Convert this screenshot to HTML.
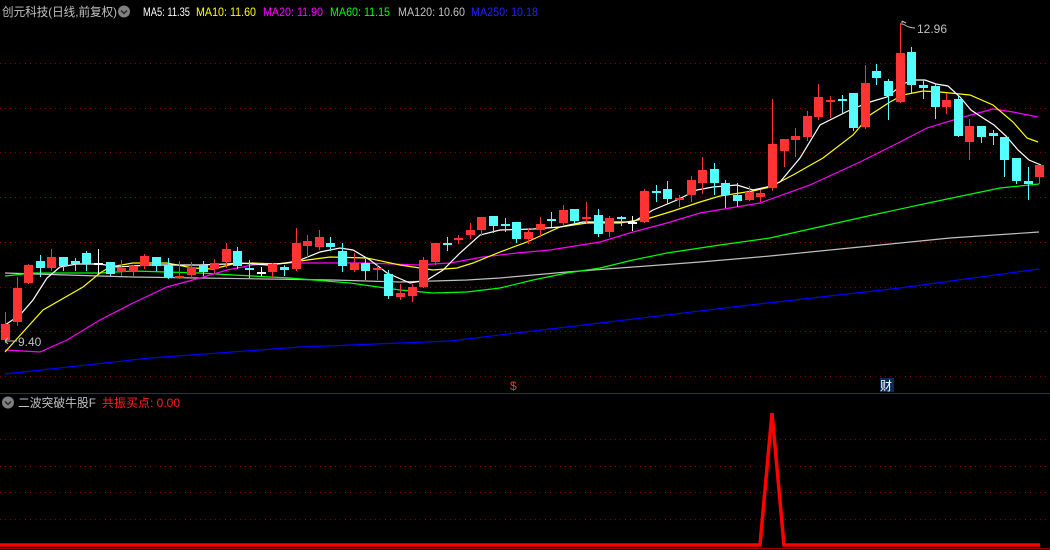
<!DOCTYPE html>
<html><head><meta charset="utf-8"><style>
html,body{margin:0;padding:0;background:#000;width:1050px;height:550px;overflow:hidden}
svg{display:block}
text{font-family:"Liberation Sans","Noto Sans CJK SC",sans-serif}
</style></head><body>
<svg id="s" width="1050" height="550" viewBox="0 0 1050 550" xmlns="http://www.w3.org/2000/svg">
<rect width="1050" height="550" fill="#000"/>
<g stroke="#8b0000" stroke-width="1" stroke-dasharray="1,4">
<line x1="0" y1="63.5" x2="1050" y2="63.5"/><line x1="0" y1="108.5" x2="1050" y2="108.5"/>
<line x1="0" y1="152.5" x2="1050" y2="152.5"/><line x1="0" y1="197.5" x2="1050" y2="197.5"/>
<line x1="0" y1="242.5" x2="1050" y2="242.5"/><line x1="0" y1="287.5" x2="1050" y2="287.5"/>
<line x1="0" y1="331.5" x2="1050" y2="331.5"/><line x1="0" y1="376.5" x2="1050" y2="376.5"/>
<line x1="0" y1="439.5" x2="1050" y2="439.5"/><line x1="0" y1="466.5" x2="1050" y2="466.5"/>
<line x1="0" y1="492.5" x2="1050" y2="492.5"/><line x1="0" y1="519.5" x2="1050" y2="519.5"/>
</g>
<line x1="0" y1="393.5" x2="1050" y2="393.5" stroke="#a00000"/>
<line x1="0" y1="548.5" x2="1050" y2="548.5" stroke="#a00000"/>
<g id="ma" fill="none" stroke-width="1.2">
<polyline stroke="#0000ff" points="5,374 150,358 300,347 450,341 600,323 750,305 900,288 1039,269"/>
<polyline stroke="#c0c0c0" points="5,273 67,275 133,277 200,278 267,279 333,280 400,282 467,280 500,278 567,272 633,267 700,262 770,256 850,248 950,238 1039,232"/>
<polyline stroke="#00ff00" points="5,276 33,273 100,273 133,271 167,272 200,273 233,275 290,278 350,283 400,290 433,293 467,292 500,288 533,280 567,273 600,268 633,260 667,253 720,245 770,238 877,214 933,202 1000,188 1039,184"/>
<polyline stroke="#ff00ff" points="5,350 40,352 67,340 100,320 133,303 167,287 200,278 227,270 253,265 290,263 333,263 367,263 417,265 450,263 483,257 517,253 550,250 600,242 633,232 667,223 700,213 760,203 810,185 860,162 900,142 927,128 960,118 993,109 1013,112 1038,117"/>
<polyline stroke="#ffff00" points="5,352 43,310 83,287 100,273 110,267 133,263 167,263 193,268 213,269 233,264 253,263 277,264 300,261 330,257 367,258 400,265 433,270 457,268 473,263 500,252 527,242 560,227 587,223 620,223 650,218 673,211 700,202 720,196 753,191 770,187 793,175 823,158 853,135 870,115 890,102 903,95 923,91 940,92 970,95 993,105 1013,122 1027,138 1038,142"/>
<polyline stroke="#ffffff" points="5,325 20,315 33,300 47,278 60,267 77,264 100,264 117,267 150,265 173,265 200,265 227,264 240,263 267,265 287,263 300,260 320,252 340,248 353,250 370,260 387,273 410,283 427,280 443,270 460,253 480,235 500,230 533,229 560,227 583,222 633,222 653,210 677,200 697,190 713,187 737,185 753,190 767,187 780,182 800,158 820,125 850,110 870,102 887,97 903,84 913,80 925,80 936,84 948,86 960,97 971,110 983,118 994,125 1006,136 1018,150 1029,160 1041,165"/>
</g>
<g id="c"></g>
<text x="2" y="16" font-size="12" fill="#c0c0c0" textLength="115" lengthAdjust="spacingAndGlyphs">创元科技(日线,前复权)</text>
<circle cx="124" cy="11.5" r="6" fill="#808080"/><path d="M121,10.5 l3,3 l3,-3" stroke="#222" stroke-width="1.3" fill="none"/>
<g font-size="12">
<text x="143" y="16" fill="#fff" textLength="47" lengthAdjust="spacingAndGlyphs">MA5: 11.35</text>
<text x="196" y="16" fill="#ffff00" textLength="60" lengthAdjust="spacingAndGlyphs">MA10: 11.60</text>
<text x="263" y="16" fill="#ff00ff" textLength="60" lengthAdjust="spacingAndGlyphs">MA20: 11.90</text>
<text x="330" y="16" fill="#00ff00" textLength="60" lengthAdjust="spacingAndGlyphs">MA60: 11.15</text>
<text x="398" y="16" fill="#c0c0c0" textLength="67" lengthAdjust="spacingAndGlyphs">MA120: 10.60</text>
<text x="471" y="16" fill="#2020ff" textLength="67" lengthAdjust="spacingAndGlyphs">MA250: 10.18</text>
</g>
<text x="917" y="33" font-size="12" fill="#c0c0c0">12.96</text>
<path d="M902,21 l0,4 M902,21 l4,2 M903,24 q6,4 12,4" stroke="#c0c0c0" fill="none"/>
<text x="18" y="346" font-size="12" fill="#c0c0c0">9.40</text>
<path d="M5,341 l12,0 M5,341 l3,-3 M5,341 l3,3" stroke="#c0c0c0" fill="none"/>
<text x="510" y="390" font-size="12" fill="#ff3030">$</text>
<rect x="880" y="378" width="14" height="14" fill="#0a2a5a"/>
<text x="880" y="390" font-size="12" fill="#fff">财</text>
<circle cx="8" cy="402.5" r="6" fill="#808080"/><path d="M5,401.5 l3,3 l3,-3" stroke="#222" stroke-width="1.3" fill="none"/>
<text x="18" y="407" font-size="12" fill="#c0c0c0" textLength="78" lengthAdjust="spacingAndGlyphs">二波突破牛股F</text>
<text x="102" y="407" font-size="12" fill="#ff2020" textLength="78" lengthAdjust="spacingAndGlyphs">共振买点: 0.00</text>
<polyline points="0,545 760,545 772,413 784,545 1040,545" fill="none" stroke="#ff0000" stroke-width="3.5"/>
</svg>
<script>
var d=[["r",312,324,340,342],["r",277,288,322,325],["r",264,265,283,283],["c",255,261,268,276],["r",249,257,268,270],["c",257,257,266,270],["c",258,261,264,270],["c",251,253,264,270],["d",249,263,264,273],["c",262,262,274,275],
["r",260,268,272,275],["r",265,266,271,275],["r",254,256,266,268],["c",257,257,266,270],["c",258,265,277,278],["r",261,276,278,278],["r",262,267,275,278],["c",261,265,272,275],["r",259,263,269,272],["r",243,249,262,267],
["c",247,251,266,268],["c",260,268,270,277],["d",267,272,273,275],["r",263,264,272,277],["c",265,267,270,275],["r",228,243,269,270],["r",235,241,246,257],["r",230,237,247,249],["c",237,243,247,250],["c",243,251,266,271],
["r",253,263,270,271],["c",259,263,271,279],["r",263,268,269,279],["c",270,274,296,298],["r",284,293,297,299],["r",284,287,296,301],["r",257,260,287,287],["r",243,243,262,264],["c",237,243,245,250],["r",235,238,240,243],
["r",223,230,235,238],["r",217,217,230,235],["c",216,216,226,232],["c",218,224,226,231],["c",222,222,239,242],["r",228,232,239,243],["r",217,224,230,236],["c",212,219,221,226],["r",205,210,223,225],["c",209,209,221,223],
["r",202,217,218,222],["c",209,215,234,236],["r",216,218,232,236],["c",216,217,219,225],["d",216,222,223,230],["r",189,191,222,222],["c",185,191,193,201],["c",181,189,199,203],["r",195,198,199,206],["r",176,180,195,201],
["r",157,170,183,193],["c",163,169,183,194],["c",180,183,195,207],["c",183,195,201,206],["r",186,192,200,200],["r",190,193,197,201],["r",99,144,188,190],["r",139,139,151,166],["r",128,136,140,156],["r",111,116,137,140],
["r",84,97,117,119],["r",96,100,102,117],["c",95,99,101,112],["c",93,93,128,130],["r",65,83,127,128],["c",64,71,78,84],["c",79,81,96,119],["r",23,53,102,102],["c",47,52,85,92],["c",80,85,88,98],
["c",83,86,107,118],["r",93,100,107,113],["c",95,99,136,136],["r",119,126,142,159],["c",126,126,137,142],["c",130,133,136,144],["c",137,137,160,176],["c",158,158,181,183],["c",167,181,184,199],["r",165,165,177,183]];
var h="";
for(var i=0;i<d.length;i++){var a=d[i],x=Math.round(5+11.62*i),col=a[0]=="r"?"#ff3333":a[0]=="c"?"#54ffff":"#ffffff";
h+='<rect x="'+x+'" y="'+a[1]+'" width="1" height="'+(a[4]-a[1]+1)+'" fill="'+col+'"/>';
var bh=a[3]-a[2];if(bh<2){h+='<rect x="'+(x-4)+'" y="'+a[2]+'" width="9" height="2" fill="'+col+'"/>';}
else h+='<rect x="'+(x-4)+'" y="'+a[2]+'" width="9" height="'+bh+'" fill="'+col+'"/>';}
document.getElementById("c").innerHTML=h;
</script>
</body></html>
